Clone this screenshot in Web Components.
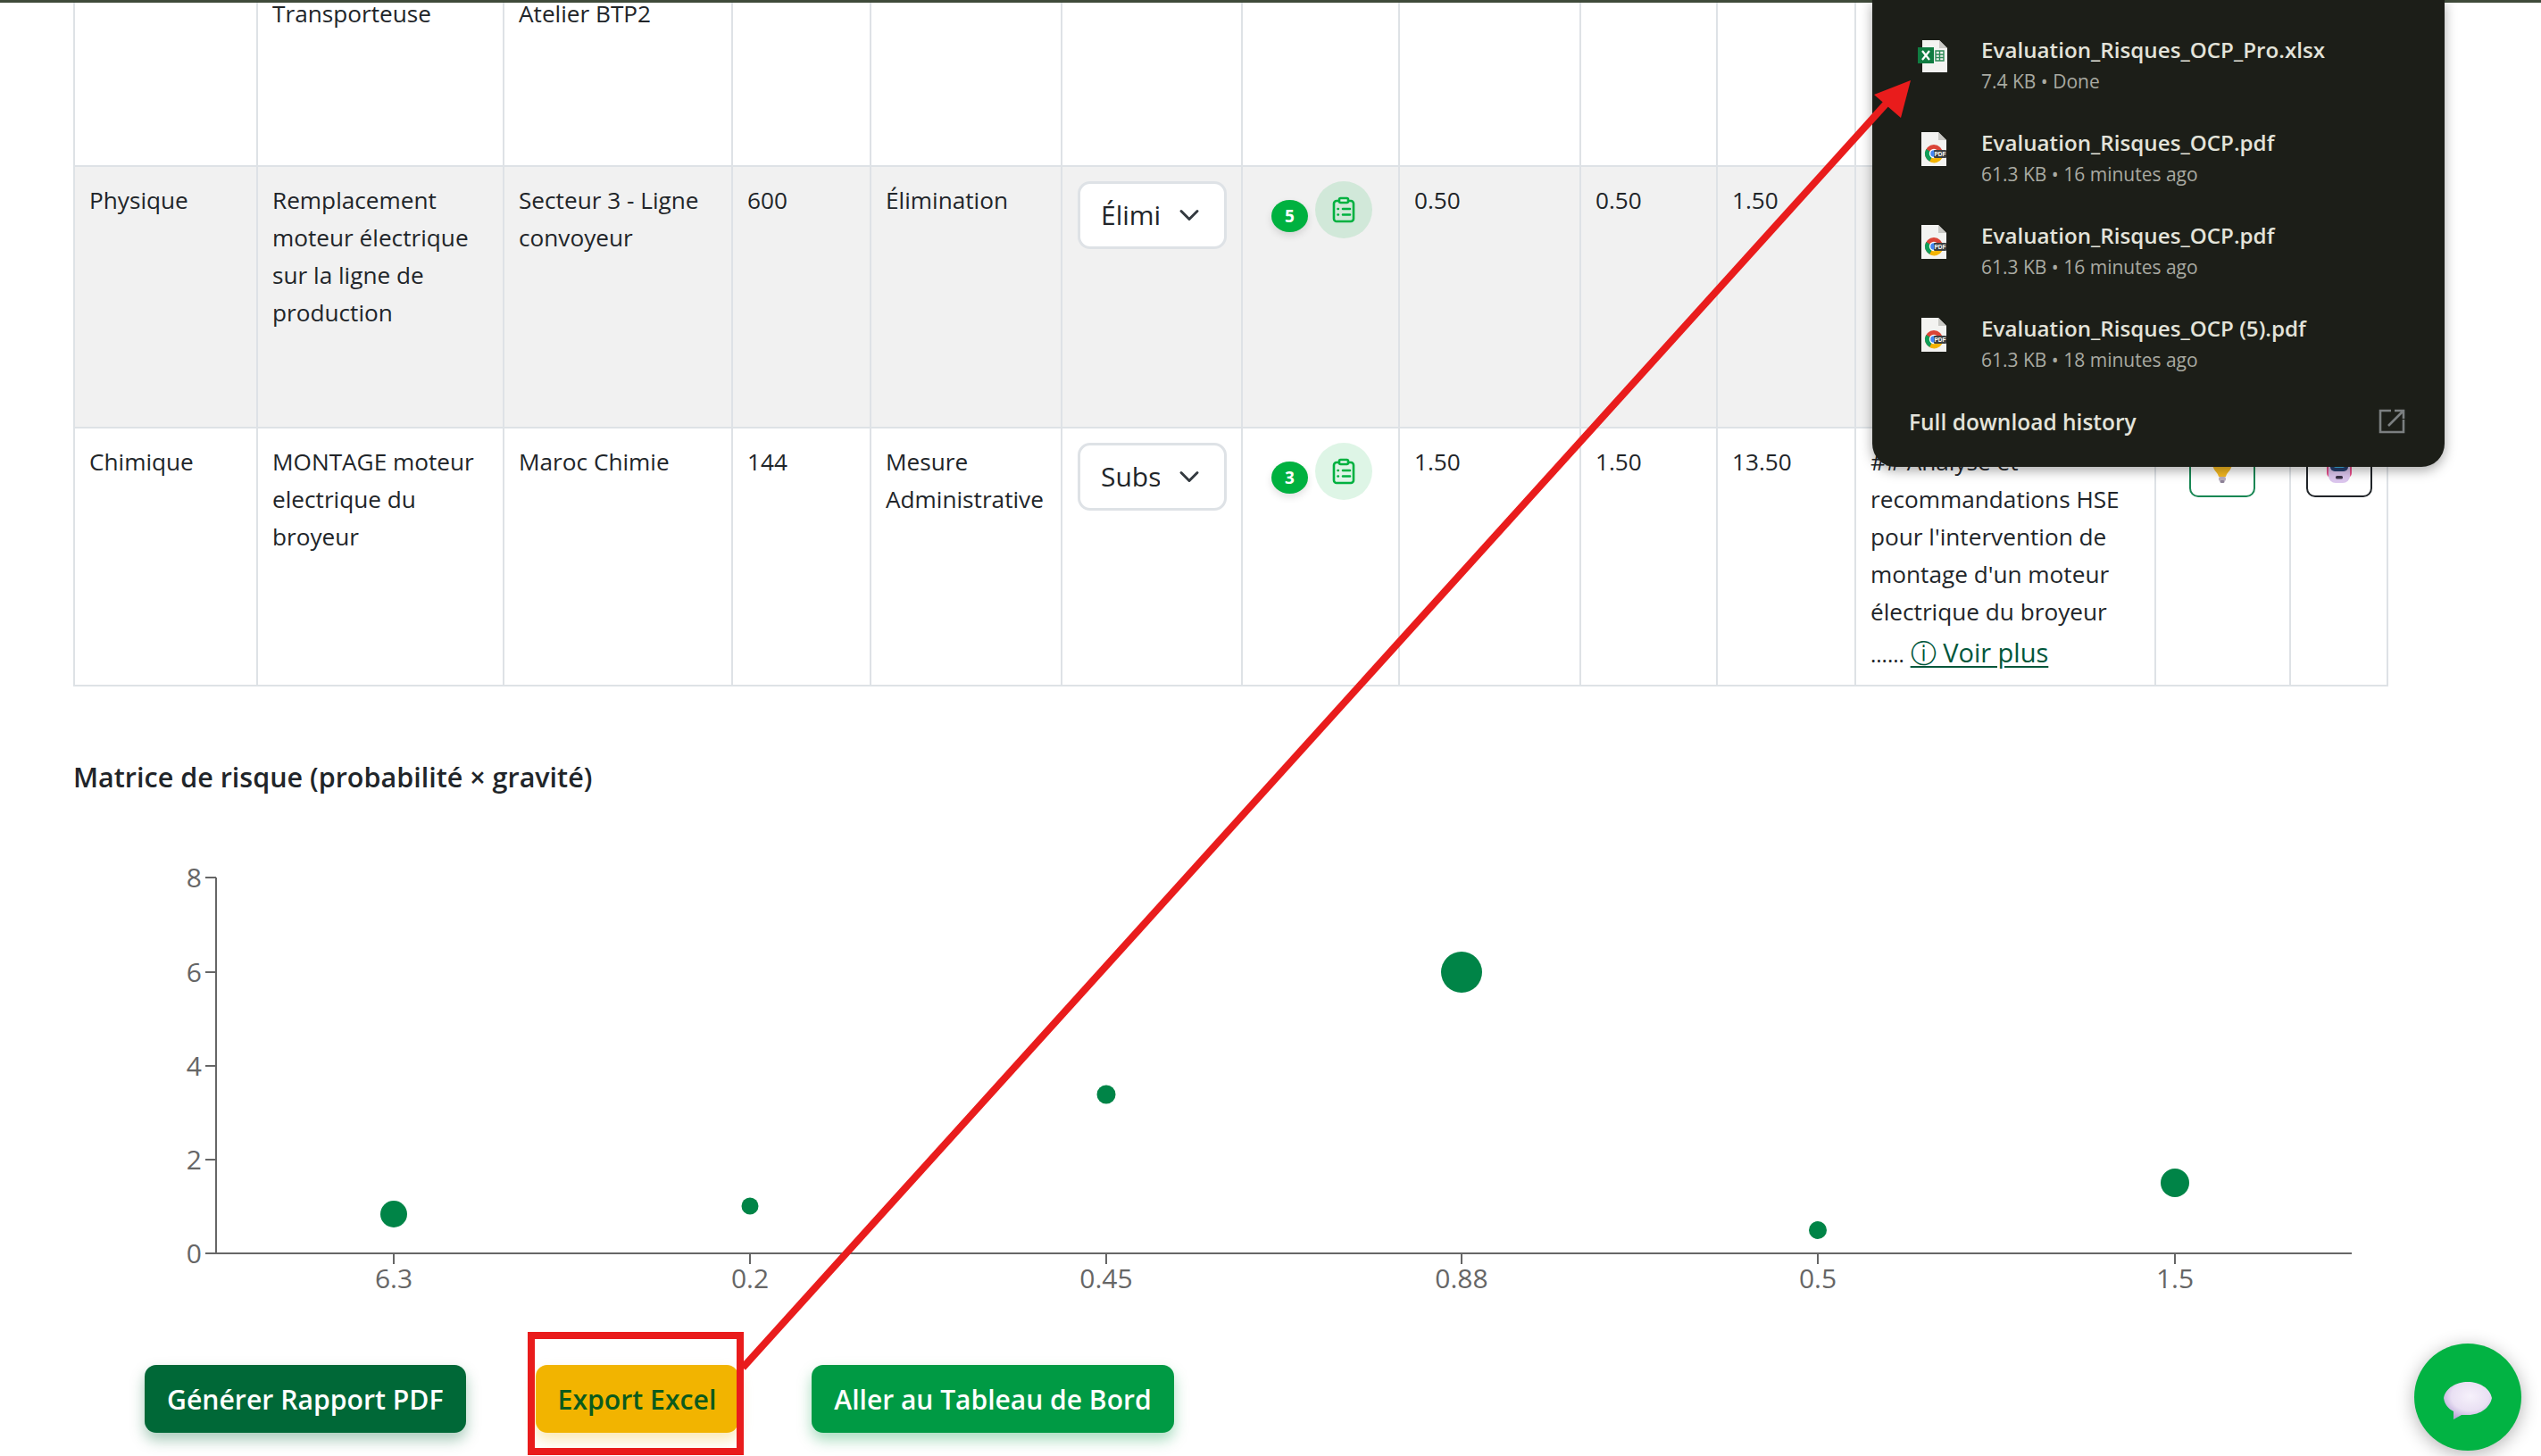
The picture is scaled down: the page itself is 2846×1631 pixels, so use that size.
<!DOCTYPE html>
<html lang="fr">
<head>
<meta charset="utf-8">
<title>Evaluation des risques</title>
<style>
  html, body { margin: 0; height: 1631px; overflow: hidden; background: #fff; }
  body {
    position: relative;
    font-family: "Open Sans", "Noto Sans", "DejaVu Sans", sans-serif;
    color: #212529;
  }
</style>
</head>
<body>
<top-edge></top-edge>
<risk-table></risk-table>
<section-title>Matrice de risque (probabilité × gravité)</section-title>
<risk-chart></risk-chart>
<action-bar>
  <action-button kind="dark">Générer Rapport PDF</action-button>
  <action-button kind="amber">Export Excel</action-button>
  <action-button kind="green" style="margin-left:4px;font-size:30px">Aller au Tableau de Bord</action-button>
</action-bar>
<download-popup>
  <download-item type="xlsx" name="Evaluation_Risques_OCP_Pro.xlsx" meta="7.4 KB • Done"></download-item>
  <download-item type="pdf" name="Evaluation_Risques_OCP.pdf" meta="61.3 KB • 16 minutes ago"></download-item>
  <download-item type="pdf" name="Evaluation_Risques_OCP.pdf" meta="61.3 KB • 16 minutes ago"></download-item>
  <download-item type="pdf" name="Evaluation_Risques_OCP (5).pdf" meta="61.3 KB • 18 minutes ago"></download-item>
</download-popup>
<chat-fab></chat-fab>
<red-annotation></red-annotation>

<script>
  class TopEdge extends HTMLElement {
    constructor() {
      super();
      this.attachShadow({ mode: "open" }).innerHTML = `
        <style>
          :host { display: block; height: 3px; background: #3f4a3a; position: relative; z-index: 2; }
        </style>`;
    }
  }

  class RiskSelect extends HTMLElement {
    constructor() {
      super();
      this.attachShadow({ mode: "open" }).innerHTML = `
        <style>
          :host {
            display: flex; align-items: center; box-sizing: border-box;
            width: 167px; height: 76px; padding: 0 0 0 23px;
            background: #fff; border: 3px solid #dee2e6; border-radius: 14px;
            font-size: 30px; color: #212529;
          }
          .txt { width: 66px; overflow: hidden; white-space: nowrap; }
          svg { margin-left: 21px; flex: none; }
        </style>
        <span class="txt"><slot></slot></span>
        <svg width="24" height="24" viewBox="0 0 16 16" fill="none" stroke="#343a40" stroke-width="2" stroke-linecap="round" stroke-linejoin="round"><path d="M2 5l6 6 6-6"/></svg>`;
    }
  }

  class ActionBadge extends HTMLElement {
    constructor() {
      super();
      this.attachShadow({ mode: "open" }).innerHTML = `
        <style>
          :host { display: flex; align-items: flex-start; gap: 8px; padding-left: 32px; }
          .count {
            margin-top: 21px; width: 41px; height: 36px; border-radius: 50%;
            background: #00b140; color: #fff; font-size: 19px; font-weight: 700;
            display: flex; align-items: center; justify-content: center;
            box-shadow: 0 4px 8px rgba(0,0,0,.12);
          }
          .clip {
            width: 64px; height: 64px; border-radius: 50%;
            background: rgba(0,177,64,.13);
            display: flex; align-items: center; justify-content: center;
          }
        </style>
        <span class="count"><slot></slot></span>
        <span class="clip">
          <svg width="26" height="30" viewBox="0 0 26 30" fill="none" stroke="#00b140" stroke-width="2.6" stroke-linecap="round" stroke-linejoin="round">
            <rect x="2" y="5" width="22" height="23" rx="3"/>
            <rect x="8" y="2" width="10" height="5" rx="1.5" fill="#e4f5ea"/>
            <path d="M12 14h8M12 20.5h8"/>
            <path d="M6.5 14h.4M6.5 20.5h.4"/>
          </svg>
        </span>`;
    }
  }

  class EmojiButton extends HTMLElement {
    constructor() {
      super();
      const robot = this.getAttribute("kind") === "robot";
      this.attachShadow({ mode: "open" }).innerHTML = `
        <style>
          :host {
            display: flex; align-items: flex-end; justify-content: center; box-sizing: border-box;
            width: 74px; height: 61px; padding-bottom: 14px;
            border: 2.5px solid ${robot ? "#212529" : "#198754"}; border-radius: 10px;
          }
        </style>
        ${robot ? `
        <svg width="28" height="32" viewBox="0 0 28 32">
          <rect x="0" y="8" width="28" height="18" rx="5" fill="#ea4f8c"/>
          <rect x="2" y="2" width="24" height="30" rx="8" fill="#dcc6ee"/>
          <rect x="4" y="6" width="20" height="13" rx="5" fill="#27406f"/>
          <rect x="8" y="11" width="12" height="4" rx="2" fill="#3fb8e8"/>
          <rect x="10" y="24" width="8" height="3.5" rx="1.5" fill="#3a3146"/>
        </svg>` : `
        <svg width="28" height="32" viewBox="0 0 28 32">
          <path d="M14 0a11 11 0 0 1 9 17c-2 3-4 4-5 8H10c-1-4-3-5-5-8A11 11 0 0 1 14 0z" fill="#f5b921"/>
          <rect x="10" y="25" width="8" height="5" rx="2" fill="#b9aebd"/>
          <rect x="11.5" y="29" width="5" height="3" rx="1.5" fill="#8e8398"/>
        </svg>`}`;
    }
  }

  class RiskTable extends HTMLElement {
    constructor() {
      super();
      const widths = [205, 276, 256, 155, 214, 202, 176, 203, 153, 155, 336, 151, 109];
      const rows = [
        { h: 209, cells: ["", "Transporteuse", "Atelier BTP2", "", "", "", "", "", "", "", "", "", ""], blank: true },
        {
          h: 293, alt: true,
          cells: ["Physique", "Remplacement moteur électrique sur la ligne de production", "Secteur 3 - Ligne convoyeur", "600", "Élimination"],
          select: "Élimination", count: 5, nums: ["0.50", "0.50", "1.50"], rec: ""
        },
        {
          h: 289,
          cells: ["Chimique", "MONTAGE moteur electrique du broyeur", "Maroc Chimie", "144", "Mesure Administrative"],
          select: "Substitution", count: 3, nums: ["1.50", "1.50", "13.50"],
          rec: `## Analyse et recommandations HSE pour l'intervention de montage d'un moteur électrique du broyeur <span class="dots">......</span> <a>&#9432; Voir plus</a>`
        }
      ];
      const body = rows.map((r) => {
        let tds;
        if (r.blank) {
          tds = r.cells.map((c) => `<td>${c}</td>`).join("");
        } else {
          tds = r.cells.map((c) => `<td>${c}</td>`).join("")
            + `<td class="ctl"><risk-select>${r.select}</risk-select></td>`
            + `<td class="ctl"><action-badge>${r.count}</action-badge></td>`
            + r.nums.map((n) => `<td>${n}</td>`).join("")
            + `<td>${r.rec}</td>`
            + `<td class="ctl"><emoji-button kind="bulb" style="margin-left:37px"></emoji-button></td>`
            + `<td class="ctl"><emoji-button kind="robot" style="margin-left:17px"></emoji-button></td>`;
        }
        return `<tr class="${r.alt ? "alt" : ""}" style="height:${r.h}px">${tds}</tr>`;
      }).join("");

      this.attachShadow({ mode: "open" }).innerHTML = `
        <style>
          :host { display: block; margin: -27px 0 0 82px; width: 2592px; font-size: 26.2px; line-height: 42px; color: #212529; }
          table { border-collapse: collapse; table-layout: fixed; width: 2592px; }
          td { border: 2px solid #dee2e6; padding: 16px 17px 0 16px; vertical-align: top; word-wrap: break-word; }
          td.ctl { padding: 16px 0 0 17px; }
          td.ctl:nth-child(n+12), td.ctl:nth-child(7) { padding-left: 0; }
          tr.alt td { background: #f1f1f1; }
          a { display: inline-block; padding-top: 4px; color: #00563b; text-decoration: underline; font-size: 29px; font-weight: 500; text-underline-offset: 4px; }
          .dots { font-size: 24px; }
        </style>
        <table>
          <colgroup>${widths.map((w) => `<col style="width:${w}px">`).join("")}</colgroup>
          <tbody>${body}</tbody>
        </table>`;
    }
  }

  class SectionTitle extends HTMLElement {
    constructor() {
      super();
      this.attachShadow({ mode: "open" }).innerHTML = `
        <style>
          :host { display: block; margin: 77px 0 0 82px; font-size: 30.5px; line-height: 48px; font-weight: 600; color: #212529; }
        </style>
        <slot></slot>`;
    }
  }

  class RiskChart extends HTMLElement {
    constructor() {
      super();
      const yTicks = [[0, 1404], [2, 1299], [4, 1194], [6, 1089], [8, 983]];
      const points = [
        ["6.3", 441, 1360, 15], ["0.2", 840, 1351, 9.5], ["0.45", 1239, 1226, 10.5],
        ["0.88", 1637, 1089, 23], ["0.5", 2036, 1378, 10], ["1.5", 2436, 1325, 16]
      ];
      const top = 960;
      const y = (v) => v - top;
      this.attachShadow({ mode: "open" }).innerHTML = `
        <style>
          :host { display: block; height: 500px; margin-top: 66px; }
          svg { display: block; }
          text { font-size: 30px; fill: #666; }
        </style>
        <svg width="2846" height="500" viewBox="0 0 2846 500">
          <g stroke="#666" stroke-width="2">
            <path d="M242 ${y(983)}V${y(1404)}H2634" fill="none"/>
            ${yTicks.map((t) => `<path d="M230 ${y(t[1])}H242"/>`).join("")}
            ${points.map((p) => `<path d="M${p[1]} ${y(1404)}v12"/>`).join("")}
          </g>
          ${yTicks.map((t) => `<text x="226" y="${y(t[1]) + 11}" text-anchor="end">${t[0]}</text>`).join("")}
          ${points.map((p) => `<text x="${p[1]}" y="${y(1443)}" text-anchor="middle">${p[0]}</text>`).join("")}
          ${points.map((p) => `<circle cx="${p[1]}" cy="${y(p[2])}" r="${p[3]}" fill="#008447"/>`).join("")}
        </svg>`;
    }
  }

  class ActionBar extends HTMLElement {
    constructor() {
      super();
      this.attachShadow({ mode: "open" }).innerHTML = `
        <style>
          :host { display: flex; gap: 78px; margin-top: 69px; padding-left: 162px; }
        </style>
        <slot></slot>`;
    }
  }

  class ActionButton extends HTMLElement {
    constructor() {
      super();
      const colors = {
        dark: ["#006837", "#fff", "rgba(0,104,55,.35)"],
        amber: ["#f2b400", "#0b5a1c", "rgba(242,180,0,.3)"],
        green: ["#009a44", "#fff", "rgba(0,154,68,.35)"]
      }[this.getAttribute("kind")];
      this.attachShadow({ mode: "open" }).innerHTML = `
        <style>
          :host {
            display: flex; align-items: center; box-sizing: border-box;
            height: 76px; padding: 0 25px; border-radius: 13px;
            background: ${colors[0]}; color: ${colors[1]};
            font-size: 30.2px; font-weight: 600; white-space: nowrap;
            box-shadow: 0 8px 16px ${colors[2]};
          }
        </style>
        <slot></slot>`;
    }
  }

  class DownloadPopup extends HTMLElement {
    constructor() {
      super();
      this.attachShadow({ mode: "open" }).innerHTML = `
        <style>
          :host {
            position: absolute; left: 2097px; top: 0; width: 641px; height: 523px; z-index: 3;
            box-sizing: border-box; padding-top: 26px; display: flex; flex-direction: column;
            background: #1c1e18; border-radius: 0 0 26px 26px;
            box-shadow: 0 4px 14px rgba(0,0,0,.35);
          }
          footer {
            display: flex; align-items: center; justify-content: space-between;
            height: 81px; padding: 0 44px 21px 41px; box-sizing: border-box; flex: none;
            color: #e3e3da; font-size: 24.5px; font-weight: 600;
          }
        </style>
        <slot></slot>
        <footer>
          <span>Full download history</span>
          <svg width="30" height="28" viewBox="0 0 30 28" fill="none" stroke="#7b7f80" stroke-width="2.6">
            <path d="M14 2H2v24h26V12"/><path d="M11 19L27 3M18 2h10v9"/>
          </svg>
        </footer>`;
    }
  }

  class DownloadItem extends HTMLElement {
    constructor() {
      super();
      const isXlsx = this.getAttribute("type") === "xlsx";
      const icon = isXlsx ? `
        <svg width="34" height="38" viewBox="0 0 34 38">
          <path d="M5 1h19l9 9v27H5z" fill="#f3f3f1"/>
          <path d="M24 1l9 9h-9z" fill="#c9c9c5"/>
          <rect x="0" y="9" width="18" height="18" fill="#107c41"/>
          <path d="M5 13l8 10M13 13l-8 10" stroke="#fff" stroke-width="2.2"/>
          <path d="M20 13h9v11h-9zM20 17h9M20 20.5h9M24.5 13v11" fill="none" stroke="#2e8b57" stroke-width="1.4"/>
        </svg>` : `
        <svg width="34" height="38" viewBox="0 0 34 38">
          <path d="M4 0h19l9 9v29H4z" fill="#f3f3f1"/>
          <path d="M23 0l9 9h-9z" fill="#c9c9c5"/>
          <circle cx="18" cy="24" r="10" fill="#db4437"/>
          <path d="M18 24L9.3 19a10 10 0 0 0 4 14z" fill="#0f9d58"/>
          <path d="M18 24l-4.7 9a10 10 0 0 0 14-4z" fill="#f4b400"/>
          <circle cx="18" cy="24" r="4.5" fill="#4285f4" stroke="#fff" stroke-width="1.4"/>
          <rect x="18" y="20" width="14" height="9" rx="1" fill="#3c4043"/>
          <text x="25" y="27" font-size="6.5" font-weight="700" fill="#fff" text-anchor="middle" font-family="Liberation Sans, sans-serif">PDF</text>
        </svg>`;
      this.attachShadow({ mode: "open" }).innerHTML = `
        <style>
          :host { display: flex; flex: none; height: 104px; box-sizing: border-box; padding: 12px 0 0 51px; }
          .icon { width: 71px; padding-top: 6px; flex: none; }
          .name { color: #e3e3da; font-size: 24.2px; font-weight: 600; line-height: 36px; white-space: nowrap; }
          .meta { color: #a9aaa2; font-size: 21px; line-height: 34px; white-space: nowrap; }
        </style>
        <span class="icon">${icon}</span>
        <div>
          <div class="name">${this.getAttribute("name")}</div>
          <div class="meta">${this.getAttribute("meta")}</div>
        </div>`;
    }
  }

  class ChatFab extends HTMLElement {
    constructor() {
      super();
      this.attachShadow({ mode: "open" }).innerHTML = `
        <style>
          :host {
            position: absolute; left: 2704px; top: 1505px; width: 120px; height: 120px; z-index: 3;
            border-radius: 50%; background: #02b343; box-shadow: 0 4px 20px rgba(0,0,0,.3);
            display: flex; align-items: center; justify-content: center;
          }
        </style>
        <svg width="54" height="42" viewBox="0 0 54 42" style="margin-top:7px">
          <defs>
            <radialGradient id="bub" cx="55%" cy="38%" r="65%">
              <stop offset="0" stop-color="#f6f1fb"/><stop offset=".6" stop-color="#e9e0f3"/><stop offset="1" stop-color="#b9a4d8"/>
            </radialGradient>
          </defs>
          <path d="M0 18C2 7 14 0 27 0s25 7 27 18c-2 10-12 19-27 19-3 0-5 0-7 0l-9 5 0-9C5 30 1 25 0 18z" fill="url(#bub)"/>
        </svg>`;
    }
  }

  class RedAnnotation extends HTMLElement {
    constructor() {
      super();
      this.attachShadow({ mode: "open" }).innerHTML = `
        <style>
          :host { position: absolute; left: 0; top: 0; width: 2846px; height: 1631px; z-index: 5; pointer-events: none; }
          svg { display: block; }
        </style>
        <svg width="2846" height="1631" viewBox="0 0 2846 1631">
          <rect x="595" y="1496" width="234" height="130" fill="none" stroke="#e91c1c" stroke-width="8"/>
          <path d="M832 1532L2118 110" stroke="#e91c1c" stroke-width="8" fill="none"/>
          <path d="M2140 90L2099 106L2129 132z" fill="#e91c1c"/>
        </svg>`;
    }
  }

  customElements.define("top-edge", TopEdge);
  customElements.define("risk-select", RiskSelect);
  customElements.define("action-badge", ActionBadge);
  customElements.define("emoji-button", EmojiButton);
  customElements.define("risk-table", RiskTable);
  customElements.define("section-title", SectionTitle);
  customElements.define("risk-chart", RiskChart);
  customElements.define("action-bar", ActionBar);
  customElements.define("action-button", ActionButton);
  customElements.define("download-popup", DownloadPopup);
  customElements.define("download-item", DownloadItem);
  customElements.define("chat-fab", ChatFab);
  customElements.define("red-annotation", RedAnnotation);
</script>
</body>
</html>
